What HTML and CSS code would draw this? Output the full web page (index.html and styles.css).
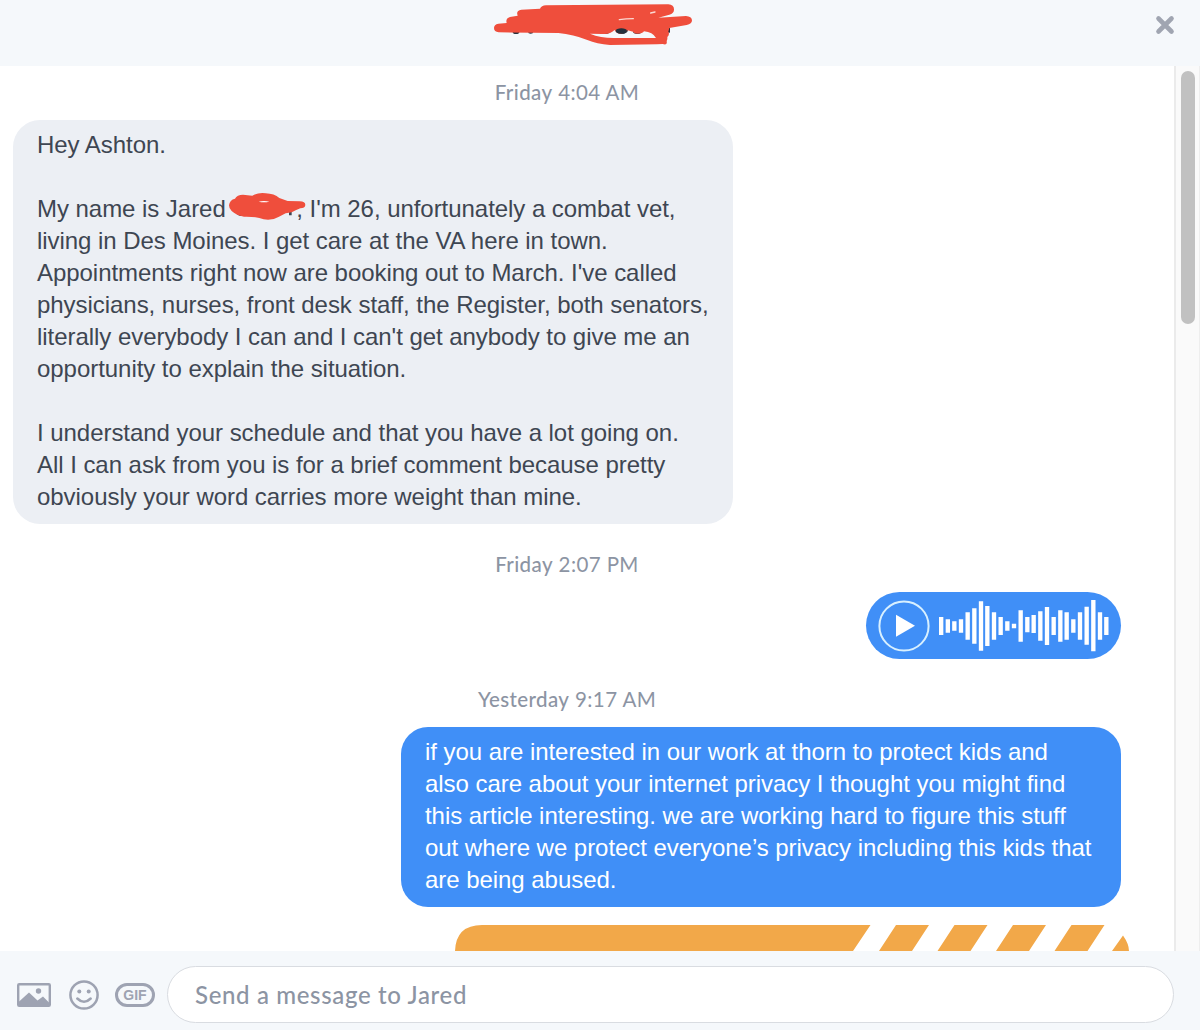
FILE: index.html
```html
<!DOCTYPE html>
<html lang="en">
<head>
  <meta charset="UTF-8" />
  <meta name="viewport" content="width=device-width, initial-scale=1" />
  <title>Messages</title>
  <link rel="stylesheet" href="styles.css">
</head>
<body>
  <div class="chat">
    <header class="chat-header">
      <svg class="name-scribble" viewBox="0 0 690 150">
        <g fill="#25303c">
          <ellipse cx="108" cy="96" rx="10" ry="6" />
          <ellipse cx="152" cy="95" rx="8" ry="6" />
          <ellipse cx="376" cy="93" rx="16" ry="9" />
          <ellipse cx="425" cy="90" rx="19" ry="12" />
          <ellipse cx="472" cy="94" rx="13" ry="8" />
          <path d="M560 84h10v14h-10z" />
        </g>
        <path fill="#ef4e3c" fill-rule="evenodd" d="M55 71L80 69Q76 55 90 51L113 47Q107 32 124 29L180 26Q184 17 198 16L565 13Q583 15 582 29Q582 40 568 44L535 53L618 48Q635 49 636 61Q636 72 620 75L568 84L565 95Q570 103 562 111Q563 118 560 123Q563 137 548 132L530 133L390 135Q350 132 322 120Q280 103 235 99L56 97Q42 95 42 84Q42 73 55 71ZM330 101Q362 114 400 114L528 114Q518 96 492 94Q488 101 472 101Q462 101 459 95L443 91Q435 101 422 101Q409 101 404 90Q390 102 375 102Q360 101 330 101Z" />
        <ellipse cx="424" cy="93" rx="17" ry="8" fill="#25303c" />
        <path d="M418 59Q438 56 460 56M512 39L525 36" fill="none" stroke="#fbd8d2" stroke-width="4" stroke-linecap="round" />
      </svg>
      <svg class="close" viewBox="0 0 20 20">
        <path d="M3.5 3.5l13 13M16.5 3.5l-13 13" />
      </svg>
    </header>

    <div class="body">
      <main class="messages">
        <div class="time"><b>Friday</b> 4:04 AM</div>
        <div class="bubble received">
          <p>Hey Ashton.</p>
          <p>My name is Jared <span class="redacted"><svg viewBox="0 0 240 90">
              <path d="M21 68Q26 78 40 78L56 76L58 70ZM180 64h8v12h-8z" fill="#3e4652" />
              <path d="M0 46Q2 29 18 26Q24 14 42 14L70 17Q88 7 110 10Q136 11 151 24L176 33L212 34Q229 34 229 45Q228 55 214 55L200 61Q190 68 170 70L150 80Q128 93 104 88Q84 79 45 80Q20 75 8 63Q0 56 0 46Z" fill="#ef4e3c" />
              <path d="M89 35Q105 31 121 35Q105 38 89 35Z" fill="#fff" />
            </svg></span>, I'm 26, unfortunately a combat vet,<br>
            living in Des Moines. I get care at the VA here in town.<br>
            Appointments right now are booking out to March. I've called<br>
            physicians, nurses, front desk staff, the Register, both senators,<br>
            literally everybody I can and I can't get anybody to give me an<br>
            opportunity to explain the situation.</p>
          <p>I understand your schedule and that you have a lot going on.<br>
            All I can ask from you is for a brief comment because pretty<br>
            obviously your word carries more weight than mine.</p>
        </div>

        <div class="time time-later"><b>Friday</b> 2:07 PM</div>
        <div class="voice">
          <svg class="play" viewBox="0 0 52 52">
            <circle cx="26" cy="26" r="24.6" />
            <path d="M18 14.7L37 25.8L18 36.8Z" />
          </svg>
          <svg class="wave" viewBox="0 0 510 156">
            <path d="M6.5 51v54M26.5 58v40M46 64v28M66 58v40M86 37v82M106 25v106M126 4v148M145 18v120M165 37v82M185 51v54M205 64v28M225 71v14M245 31v94M265 51v46M284 45v54M304 34v88M324 21v114M344 51v54M364 31v94M383 37v82M403 58v40M423 37v82M443 20v114M463 0v154M483 37v82M502 51v54" />
          </svg>
        </div>

        <div class="time time-later"><b>Yesterday</b> 9:17 AM</div>
        <div class="bubble sent">
          <p>if you are interested in our work at thorn to protect kids and<br>
            also care about your internet privacy I thought you might find<br>
            this article interesting. we are working hard to figure this stuff<br>
            out where we protect everyone’s privacy including this kids that<br>
            are being abused.</p>
        </div>

        <svg class="article" viewBox="0 0 674 26">
          <path d="M0 26Q1 0 27 0H415.500L398 26ZM441 0h33l-17 26h-33ZM499.500 0h33l-17 26h-33ZM558 0h33l-17 26h-33ZM616.500 0h33l-17 26h-33ZM668 10.500Q674 19 674 26H657Z" />
        </svg>
      </main>
      <div class="scrollbar"><div class="thumb"></div></div>
    </div>

    <footer class="composer">
      <svg class="icon-photo" viewBox="0 0 34 24">
        <rect x="1.200" y="1.200" width="31.600" height="21.600" rx="1" fill="none" stroke="#9ea3b2" stroke-width="2.400" />
        <circle cx="21.500" cy="8" r="2.700" />
        <path d="M1 19.500L12 9.500l8.500 8L26 13.500l7 7V23H1Z" />
      </svg>
      <svg class="icon-smile" viewBox="0 0 30 30">
        <circle cx="15" cy="15" r="13.600" />
        <path d="M8.300 18.500Q15 25 21.700 18.500" />
        <circle class="eye" cx="10.300" cy="11.500" r="2" />
        <circle class="eye" cx="19.700" cy="11.500" r="2" />
      </svg>
      <span class="icon-gif">GIF</span>
      <div class="input">Send a message to Jared</div>
    </footer>
  </div>
</body>
</html>
```
FILE: styles.css
```css
* {
  box-sizing: border-box;
}
body {
  margin: 0;
  background: #fff;
  font-family: "Liberation Sans", Arial, sans-serif;
}
.chat {
  display: flex;
  flex-direction: column;
  height: 1030px;
  overflow: hidden;
}
/* Header */
.chat-header {
  flex: none;
  height: 66px;
  padding-right: 25px;
  display: grid;
  grid-template-columns: 480px 230px 1fr;
  background: #f5f8fb;
}
.name-scribble {
  grid-column: 2;
  width: 230px;
  height: 50px;
}
.close {
  width: 20px;
  height: 20px;
  margin-top: 15px;
  justify-self: end;
  stroke: #a0a5b1;
  stroke-width: 4.6;
  stroke-linecap: round;
}
/* Conversation */
.body {
  height: 885px;
  display: flex;
  overflow: hidden;
}
.messages {
  flex: 1;
  min-width: 0;
  display: flex;
  flex-direction: column;
}
.messages > * {
  flex: none;
}
.time {
  width: 1134px;
  height: 54px;
  padding-top: 13px;
  line-height: 26px;
  text-align: center;
  font-family: Lato, sans-serif;
  font-size: 20.5px;
  letter-spacing: 0.4px;
  color: #8c94a3;
}
.time b {
  font-weight: 500;
}
.time-later {
  height: 68px;
  padding-top: 27px;
}
.bubble {
  width: 720px;
  padding: 9px 24px;
  border-radius: 27px;
  font-size: 24px;
  line-height: 32px;
  letter-spacing: -0.045px;
  white-space: nowrap;
}
.bubble p {
  margin: 0;
}
.bubble p + p {
  margin-top: 32px;
}
.received {
  height: 404px;
  margin-left: 13px;
  background: #eceff4;
  color: #3e4652;
}
.sent {
  height: 180px;
  margin-left: 401px;
  background: #408ff7;
  color: #fff;
}
/* The scribble spills over the text on both sides */
.redacted {
  display: inline-block;
  position: relative;
  width: 64px;
  height: 20px;
}
.redacted svg {
  position: absolute;
  left: -3px;
  top: -7px;
  width: 80px;
  height: 30px;
}
.voice {
  width: 255px;
  height: 67px;
  margin-left: 866px;
  padding-left: 12px;
  display: flex;
  align-items: center;
  gap: 9px;
  border-radius: 34px;
  background: #408ff7;
}
.play {
  width: 52px;
  height: 52px;
  fill: #fff;
}
.play circle {
  fill: none;
  stroke: #d8f0ff;
  stroke-width: 2;
}
.wave {
  width: 170px;
  height: 52px;
  fill: none;
  stroke: #fff;
  stroke-width: 13;
}
.article {
  width: 674px;
  height: 26px;
  margin: 18px 0 0 455px;
  fill: #f2a849;
}
.scrollbar {
  width: 26px;
  padding: 5px 0 0 5px;
  border-left: 2px solid #ebebeb;
  border-right: 1px solid #eee;
  background: #fafafa;
}
.thumb {
  width: 14px;
  height: 253px;
  border-radius: 7px;
  background: #c1c1c1;
}
/* Composer */
.composer {
  height: 79px;
  padding: 15px 26px 7px 17px;
  display: flex;
  align-items: center;
  background: #f5f8fb;
}
.icon-photo {
  width: 34px;
  height: 24px;
  margin-right: 18px;
  fill: #9ea3b2;
}
.icon-smile {
  width: 30px;
  height: 30px;
  margin-right: 16px;
  fill: none;
  stroke: #9ea3b2;
  stroke-width: 2.5;
  stroke-linecap: round;
}
.icon-smile .eye {
  fill: #9ea3b2;
  stroke: none;
}
.icon-gif {
  width: 40px;
  height: 24px;
  margin-right: 12px;
  border: 3px solid #9ea3b2;
  border-radius: 12px;
  font: bold 14px/18px "Liberation Sans", Arial, sans-serif;
  text-align: center;
  color: #9ea3b2;
}
.input {
  flex: 1;
  height: 57px;
  padding-left: 27px;
  border: 1px solid #d9dce1;
  border-radius: 29px;
  background: #fff;
  font-family: Lato, sans-serif;
  font-size: 24px;
  font-weight: 500;
  line-height: 55px;
  letter-spacing: 0.65px;
  color: #8c94a3;
}
```
